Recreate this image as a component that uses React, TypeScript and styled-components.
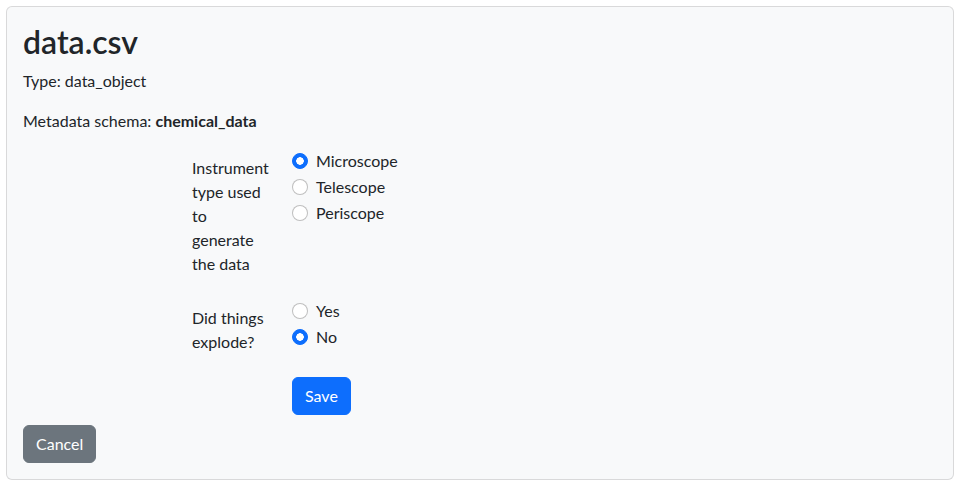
import * as React from 'react';
import styled, {createGlobalStyle} from 'styled-components';

const GlobalStyle = createGlobalStyle`
	html, body {
		margin: 0;
		padding: 0;
		background: #fff;
	}
	body {
		padding: 6px 7px 6px 6px;
		font-family: Lato, "Liberation Sans", sans-serif;
		font-size: 16px;
		line-height: 1.5;
		color: #212529;
	}
	* {
		box-sizing: border-box;
	}
`;

const Card = styled.div`
	background-color: #f8f9fa;
	border: 1px solid rgba(0, 0, 0, 0.125);
	border-radius: 6px;
	padding: 16px;
`;

const Title = styled.h2`
	margin: 0 0 8px;
	font-size: 32px;
	font-weight: 600;
	line-height: 1.2;
`;

const Para = styled.p`
	margin: 0 0 16px;
`;

const Form = styled.form`
	margin-left: 169px;
`;

const FieldRow = styled.div`
	display: flex;
	gap: 24px;
	margin-bottom: 16px;
`;

const FieldLabel = styled.label`
	width: 76px;
	flex-shrink: 0;
	padding: 7px 0;
`;

const Choices = styled.div`
	display: flex;
	flex-direction: column;
	gap: 2px;
`;

const Check = styled.label`
	display: flex;
	align-items: flex-start;
	gap: 8px;
	min-height: 24px;
	cursor: pointer;
`;

const Radio = styled.input`
	appearance: none;
	margin: 4px 0 0;
	width: 16px;
	height: 16px;
	flex-shrink: 0;
	border-radius: 50%;
	border: 1px solid rgba(0, 0, 0, 0.25);
	background-color: #fff;

	&:checked {
		border-color: #0d6efd;
		background-color: #0d6efd;
		background-image: radial-gradient(circle, #fff 0 3.5px, transparent 4px);
	}
`;

const Button = styled.button<{$variant: 'primary' | 'secondary'}>`
	display: inline-block;
	font-family: inherit;
	font-size: 16px;
	line-height: 1.5;
	padding: 6px 12px;
	border-radius: 6px;
	border: 1px solid ${(props) => props.$variant === 'primary' ? '#0d6efd' : '#6c757d'};
	background-color: ${(props) => props.$variant === 'primary' ? '#0d6efd' : '#6c757d'};
	color: #fff;
	cursor: pointer;
`;

const SaveRow = styled.div`
	padding-left: 100px;
	margin-bottom: 10px;
`;

type Field = {
	name: string;
	label: string;
	options: string[];
	selected: string;
};

const fields: Field[] = [
	{name: 'instrument', label: 'Instrument type used to generate the data', options: ['Microscope', 'Telescope', 'Periscope'], selected: 'Microscope'},
	{name: 'exploded', label: 'Did things explode?', options: ['Yes', 'No'], selected: 'No'},
];

const App = () => {
	const [values, setValues] = React.useState<Record<string, string>>(() => {
		const init: Record<string, string> = {};
		for (const f of fields)
			init[f.name] = f.selected;
		return init;
	});

	return (
		<>
			<GlobalStyle />
			<Card>
				<Title>data.csv</Title>
				<Para>Type: data_object</Para>
				<Para>Metadata schema: <strong>chemical_data</strong></Para>
				<Form onSubmit={(e) => e.preventDefault()}>
					{fields.map((f) => (
						<FieldRow key={f.name}>
							<FieldLabel>{f.label}</FieldLabel>
							<Choices>
								{f.options.map((opt) => (
									<Check key={opt}>
										<Radio
											type="radio"
											name={f.name}
											checked={values[f.name] === opt}
											onChange={() => setValues({...values, [f.name]: opt})}
										/>
										{opt}
									</Check>
								))}
							</Choices>
						</FieldRow>
					))}
					<SaveRow>
						<Button $variant="primary" type="submit">Save</Button>
					</SaveRow>
				</Form>
				<Button $variant="secondary" type="button">Cancel</Button>
			</Card>
		</>
	);
};

export default App;
